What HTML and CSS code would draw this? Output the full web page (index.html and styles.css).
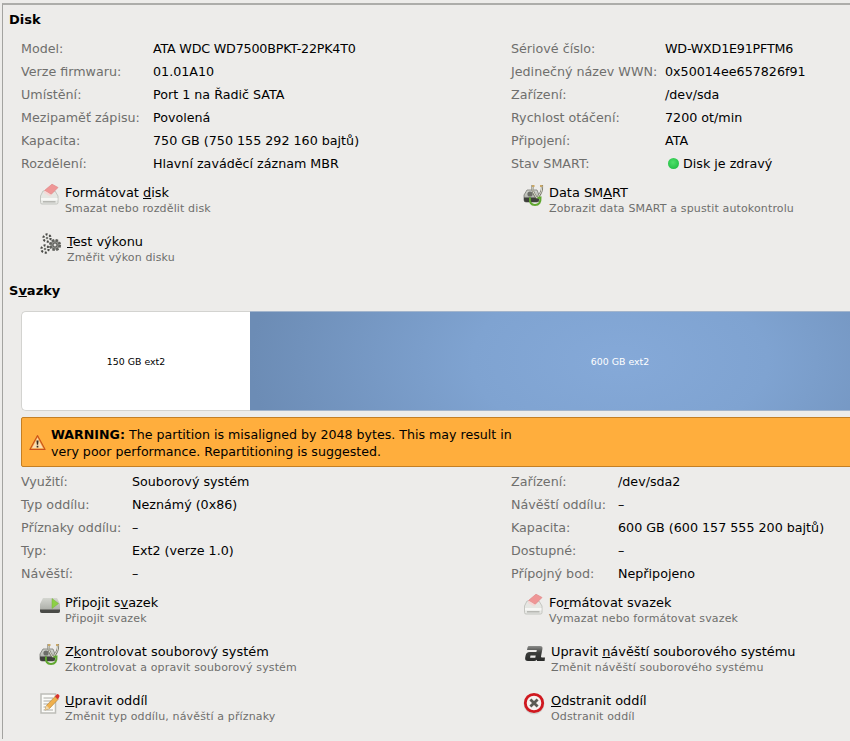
FILE: index.html
```html
<!DOCTYPE html>
<html lang="cs">
<head>
<meta charset="utf-8">
<title>Disk</title>
<link rel="stylesheet" href="styles.css">
</head>
<body>
<svg class="defs" width="0" height="0" aria-hidden="true">
  <defs>
    <linearGradient id="diskg" x1="0" y1="0" x2="0" y2="1"><stop offset="0" stop-color="#d4d6d0"/><stop offset="1" stop-color="#a2a49e"/></linearGradient>
    <linearGradient id="labelg" x1="0" y1="0" x2="0" y2="1"><stop offset="0" stop-color="#8c8d8b"/><stop offset=".45" stop-color="#3c3d3b"/><stop offset="1" stop-color="#2a2b2a"/></linearGradient>
    <symbol id="i-format" viewBox="0 0 24 24">
      <path d="M2.5 13 L5 8 H17 L20 13 V19.5 Q20 21 18.5 21 H4 Q2.5 21 2.5 19.5 Z" fill="#e6e7e3" stroke="#c4c5c0"/>
      <path d="M3 15 H19.5 V17.5 H3 Z" fill="#f7f7f5"/>
      <path d="M5 18.8 H17.5" stroke="#b2b3ae" stroke-width="1.4"/>
      <path d="M6.5 7.5 L14 1.2 L20 4.5 L13 11.5 Z" fill="#ef9696" stroke="#e08585" stroke-width=".7"/>
      <path d="M6.5 7.5 L13 11.5 L12.5 13.5 L6 10 Z" fill="#f5d8d6"/>
    </symbol>
    <symbol id="i-gears" viewBox="0 0 24 24">
      <circle cx="9" cy="6" r="3.6" fill="#f0f0ed" stroke="#4a4a47" stroke-width="2.2" stroke-dasharray="2 1.77"/>
      <circle cx="7" cy="17" r="3.6" fill="#f0f0ed" stroke="#4a4a47" stroke-width="2.2" stroke-dasharray="2 1.77"/>
      <circle cx="9" cy="6" r="1.3" fill="#777874"/>
      <circle cx="7" cy="17" r="1.3" fill="#777874"/>
      <circle cx="17" cy="13" r="4.8" fill="#8e8f8a" stroke="#5f605c" stroke-width="2.6" stroke-dasharray="2.4 1.37"/>
      <circle cx="17" cy="13" r="2" fill="#e4e4e1" stroke="#3c3c3a" stroke-width=".8"/>
    </symbol>
    <symbol id="i-smart" viewBox="0 0 24 24">
      <path d="M2 12 L5 7 H15 L17 12 V17 Q17 19 15 19 H4 Q2 19 2 17 Z" fill="url(#diskg)" stroke="#6a6c66" stroke-width=".7"/>
      <path d="M2 14.5 H17 V17 Q17 19 15 19 H4 Q2 19 2 17 Z" fill="#3f403c"/>
      <circle cx="8" cy="11" r="2.6" fill="#6c6e68"/>
      <path d="M11.5 3 H10.5 Q10 9 14 14 Q15 15.5 16 14 Q20.5 9 20 3 H19" fill="none" stroke="#77776a" stroke-width="2.2"/>
      <path d="M11.5 3 H10.5 Q10 9 14 14 Q15 15.5 16 14 Q20.5 9 20 3 H19" fill="none" stroke="#ddddd0" stroke-width="1"/>
      <path d="M10 3 H12.5 M18 3 H20.5" stroke="#c8a768" stroke-width="1.8"/>
      <path d="M8 14.5 Q7 22 13 22 Q19 22 18.5 14.5 L15.5 15" fill="none" stroke="#5fa72f" stroke-width="2"/>
    </symbol>
    <symbol id="i-mount" viewBox="0 0 24 24">
      <path d="M2 11 L5 5 H19 L22 11 V18 Q22 20 20 20 H4 Q2 20 2 18 Z" fill="url(#diskg)"/>
      <path d="M2 16.5 H22 V18 Q22 20 20 20 H4 Q2 20 2 18 Z" fill="#4a4b47"/>
      <path d="M14 5.5 L20.5 10.5 L14 15.5 Z" fill="#8cd046" stroke="#77b338" stroke-width=".5"/>
    </symbol>
    <symbol id="i-edit" viewBox="0 0 24 24">
      <path d="M3 3 H17.5 V22 H3 Z" fill="#fbfbf8" stroke="#bdbdb8" stroke-width="1.5"/>
      <path d="M5.5 7 H15 M5.5 10 H13 M5.5 13 H10 M5.5 16 H8 M5.5 19 H15" stroke="#98988f" stroke-width=".8"/>
      <path d="M7 19 L8.5 14.5 L17 5.5 L20 8.5 L11.5 17.5 Z" fill="#efb04e" stroke="#ab7a2e" stroke-width=".6"/>
      <path d="M7 19 L8.5 14.5 L11.5 17.5 Z" fill="#f0d9ad"/>
      <path d="M17 5.5 L18.6 3.5 Q19.5 2.6 20.5 3.4 L21.3 4.3 Q21.8 5.2 21.2 6 L20 8.5 Z" fill="#d9322c"/>
    </symbol>
    <symbol id="i-label" viewBox="0 0 24 24">
      <path d="M7 4 H18 Q21 4 20.4 7 L19 14.5 Q18.9 15.5 20 15.5 H23 L22.6 19 H15 L14.8 17.8 Q13.6 19 12 19 H6 Q2.6 19 3.2 15.5 L3.6 13.5 Q4.2 10 7.6 10 H14.4 L14.8 8 H5 L5.5 5.4 Q6 4 7 4 Z M8.5 13.4 L8.1 15.7 H13.3 L13.7 13.4 Z" fill="url(#labelg)" fill-rule="evenodd"/>
    </symbol>
    <symbol id="i-delete" viewBox="0 0 24 24">
      <circle cx="12" cy="12.8" r="10.4" fill="#b5b5b2" opacity=".5"/>
      <circle cx="12" cy="12" r="8.7" fill="#f6f1f0" stroke="#d0181f" stroke-width="2.8"/>
      <path d="M8.4 8.4 L15.6 15.6 M15.6 8.4 L8.4 15.6" stroke="#5a5a54" stroke-width="2.8"/>
    </symbol>
    <symbol id="i-warning" viewBox="0 0 16 16">
      <path d="M8 1.5 L15.2 14.5 H.8 Z" fill="#f39a3a" stroke="#c8511a" stroke-linejoin="round"/>
      <path d="M8 3.5 L13.3 13.3 H2.7 Z" fill="#fadcae"/>
      <path d="M7 6 H9 L8.6 10.2 H7.4 Z M7.2 11 H8.8 V12.6 H7.2 Z" fill="#3a2a1a"/>
    </symbol>
  </defs>
</svg>
<div class="window">
<main class="frame">
  <h2 class="heading">Disk</h2>
  <section class="info info-disk">
    <dl class="fields">
      <dt>Model:</dt><dd class="tight">ATA WDC WD7500BPKT-22PK4T0</dd>
      <dt>Verze firmwaru:</dt><dd>01.01A10</dd>
      <dt>Umístění:</dt><dd>Port 1 na Řadič SATA</dd>
      <dt>Mezipaměť zápisu:</dt><dd>Povolená</dd>
      <dt>Kapacita:</dt><dd>750 GB (750 155 292 160 bajtů)</dd>
      <dt>Rozdělení:</dt><dd>Hlavní zaváděcí záznam MBR</dd>
    </dl>
    <dl class="fields">
      <dt>Sériové číslo:</dt><dd class="tight">WD-WXD1E91PFTM6</dd>
      <dt>Jedinečný název WWN:</dt><dd>0x50014ee657826f91</dd>
      <dt>Zařízení:</dt><dd>/dev/sda</dd>
      <dt>Rychlost otáčení:</dt><dd>7200 ot/min</dd>
      <dt>Připojení:</dt><dd>ATA</dd>
      <dt>Stav SMART:</dt><dd class="status"><span class="dot"></span>Disk je zdravý</dd>
    </dl>
  </section>
  <section class="actions actions-disk">
    <div class="action-col">
      <div class="action"><svg class="icon"><use href="#i-format"/></svg><div><div class="title">Formátovat <u>d</u>isk</div><div class="sub">Smazat nebo rozdělit disk</div></div></div>
      <div class="action wide"><svg class="icon"><use href="#i-gears"/></svg><div><div class="title"><u>T</u>est výkonu</div><div class="sub">Změřit výkon disku</div></div></div>
    </div>
    <div class="action-col">
      <div class="action"><svg class="icon"><use href="#i-smart"/></svg><div><div class="title">Data SM<u>A</u>RT</div><div class="sub">Zobrazit data SMART a spustit autokontrolu</div></div></div>
    </div>
  </section>
  <h2 class="heading heading-vol">S<u>v</u>azky</h2>
  <div class="bar">
    <div class="seg seg-free">150 GB ext2</div>
    <div class="seg seg-used">600 GB ext2</div>
  </div>
  <div class="warning">
    <svg class="warn-icon"><use href="#i-warning"/></svg>
    <p><b>WARNING:</b> The partition is misaligned by 2048 bytes. This may result in<br>very poor performance. Repartitioning is suggested.</p>
  </div>
  <section class="info info-vol">
    <dl class="fields">
      <dt>Využití:</dt><dd>Souborový systém</dd>
      <dt>Typ oddílu:</dt><dd>Neznámý (0x86)</dd>
      <dt>Příznaky oddílu:</dt><dd>–</dd>
      <dt>Typ:</dt><dd>Ext2 (verze 1.0)</dd>
      <dt>Návěští:</dt><dd>–</dd>
    </dl>
    <dl class="fields">
      <dt>Zařízení:</dt><dd>/dev/sda2</dd>
      <dt>Návěští oddílu:</dt><dd>–</dd>
      <dt>Kapacita:</dt><dd>600 GB (600 157 555 200 bajtů)</dd>
      <dt>Dostupné:</dt><dd>–</dd>
      <dt>Přípojný bod:</dt><dd>Nepřipojeno</dd>
    </dl>
  </section>
  <section class="actions actions-vol">
    <div class="action-col">
      <div class="action"><svg class="icon"><use href="#i-mount"/></svg><div><div class="title">Připojit s<u>v</u>azek</div><div class="sub">Připojit svazek</div></div></div>
      <div class="action"><svg class="icon"><use href="#i-smart"/></svg><div><div class="title">Z<u>k</u>ontrolovat souborový systém</div><div class="sub">Zkontrolovat a opravit souborový systém</div></div></div>
      <div class="action"><svg class="icon"><use href="#i-edit"/></svg><div><div class="title"><u>U</u>pravit oddíl</div><div class="sub">Změnit typ oddílu, návěští a příznaky</div></div></div>
    </div>
    <div class="action-col">
      <div class="action"><svg class="icon"><use href="#i-format"/></svg><div><div class="title">Fo<u>r</u>mátovat svazek</div><div class="sub">Vymazat nebo formátovat svazek</div></div></div>
      <div class="action wide"><svg class="icon"><use href="#i-label"/></svg><div><div class="title">Upravit <u>n</u>ávěští souborového systému</div><div class="sub">Změnit návěští souborového systému</div></div></div>
      <div class="action wide"><svg class="icon"><use href="#i-delete"/></svg><div><div class="title"><u>O</u>dstranit oddíl</div><div class="sub">Odstranit oddíl</div></div></div>
    </div>
  </section>
</main>
</div>
</body>
</html>
```
FILE: styles.css
```css
* { box-sizing: border-box; }
html, body { margin: 0; padding: 0; height: 741px; overflow: hidden; background: #edecea; }
body { font-family: "DejaVu Sans", sans-serif; font-size: 12.7px; line-height: 15px; color: #000; }
.defs { display: block; height: 0; }
.window { width: 990px; padding: 3px 0 0 2px; background: #edecea; }
.frame { border-top: 2px solid #adadaa; border-left: 1px solid #a3a3a0; padding: 7px 0 0 6px; height: 736px; }
.heading { margin: 0; font-size: 13px; line-height: 15px; font-weight: bold; }
.heading-vol { margin-top: 0; }
.info { display: grid; grid-template-columns: 490px 1fr; margin: 0 0 0 12px; }
.info-disk { margin-top: 10px; }
.info-vol { margin-top: 3px; }
.fields { display: grid; margin: 0; grid-auto-rows: 23px; align-items: center; }
.info-disk .fields { grid-template-columns: 132px 1fr; }
.info-disk .fields + .fields { grid-template-columns: 154px 1fr; }
.info-vol .fields { grid-template-columns: 111px 1fr; }
.info-vol .fields + .fields { grid-template-columns: 107px 1fr; }
dt { color: #6f6f6d; }
dd { margin: 0; }
.tight { letter-spacing: -.2px; }
.status { display: flex; align-items: center; }
.dot { width: 11px; height: 11px; border-radius: 50%; margin: 0 4px 0 3px; background: radial-gradient(circle at 45% 40%, #4fe06a, #17b53a); }
.actions { display: grid; grid-template-columns: 484px 1fr; margin-left: 31px; }
.actions-disk { margin-top: 10px; }
.actions-vol { margin-top: 10px; }
.action-col { display: flex; flex-direction: column; }
.action { display: flex; align-items: flex-start; height: 49px; gap: 3px; }
.action .icon { width: 24px; height: 24px; flex: none; margin: -2px 0 0 -2px; }
.action.wide { gap: 5px; }
.title { font-size: 12.9px; line-height: 16px; }
.sub { font-size: 11px; line-height: 15px; color: #6f6f6d; letter-spacing: .14px; }
.bar { display: flex; margin: 13px 0 0 12px; width: 969px; height: 100px; }
.seg { display: flex; align-items: center; justify-content: center; font-size: 9.4px; }
.seg-free { width: 229px; background: #fff; border: 1px solid #d3d3d0; border-right: 0; border-radius: 5px 0 0 5px; }
.seg-used { flex: 1; color: #fff; border: solid #a3b5cc; border-width: 1px 0; background: radial-gradient(ellipse 370px 200px at 50% 50%, #85a9d8 0%, #7fa3d1 40%, #6c8cb5 100%); }
.warning { display: flex; align-items: center; margin: 6px 0 0 12px; width: 969px; height: 50px; background: #ffae3d; border: 1px solid #c47f24; border-radius: 2px; padding: 0 0 0 7px; gap: 5px; }
.warn-icon { width: 17px; height: 17px; flex: none; }
.warning p { margin: 2px 0 0; line-height: 17px; font-size: 12.62px; }
```
